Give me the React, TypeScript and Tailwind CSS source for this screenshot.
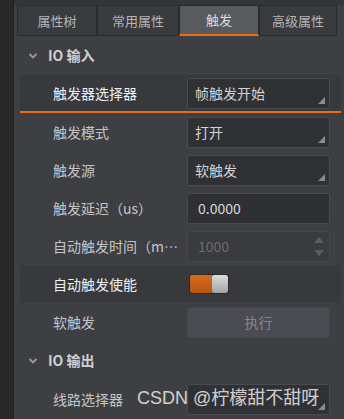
import type { ReactNode } from 'react';

const tabs = [
  { label: '属性树', w: 'w-[80px]' },
  { label: '常用属性', w: 'w-[82px]' },
  { label: '触发', w: 'w-[80px]', active: true },
  { label: '高级属性', w: 'w-[78px]' },
];

function Chevron() {
  return (
    <svg width="10" height="8" viewBox="0 0 10 8" className="mr-[10px]">
      <path d="M1.5 2 L5 5.5 L8.5 2" fill="none" stroke="#9a9b9e" strokeWidth="1.8" />
    </svg>
  );
}

function Section({ title }: { title: string }) {
  return (
    <div className="flex h-[39px] items-center pl-[8px] text-[14px] font-bold text-[#cfd0d2]">
      <Chevron />
      {title}
    </div>
  );
}

function Row({
  label,
  active,
  marked,
  children,
}: {
  label: string;
  active?: boolean;
  marked?: boolean;
  children?: ReactNode;
}) {
  return (
    <div
      className={`flex h-[38px] items-center mr-[3px] ${active ? 'bg-[#38393c]' : ''} ${
        marked ? 'border-b-2 border-[#f06a10]' : ''
      }`}
    >
      <div
        className={`w-[167px] shrink-0 truncate pl-[33px] pr-[6px] text-[14px] ${
          active ? 'text-[#f0f0f0]' : 'text-[#c4c5c7]'
        }`}
      >
        {label}
      </div>
      <div className="w-[143px] shrink-0">{children}</div>
    </div>
  );
}

function Select({ value }: { value: string }) {
  return (
    <div className="relative flex h-[31px] items-center rounded-[2px] border border-[#4a4b4e] bg-[#303134] pl-[7px] text-[14px] text-[#d2d3d5]">
      {value}
      <svg width="7" height="7" viewBox="0 0 7 7" className="absolute right-[4px] bottom-[4px]">
        <path d="M7 0 L7 7 L0 7 Z" fill="#8a8b8e" />
      </svg>
    </div>
  );
}

export default function App() {
  return (
    <div className="flex h-[419px] w-[344px] overflow-hidden bg-[#3e3f42] font-['Microsoft_YaHei','Noto_Sans_CJK_SC',sans-serif]">
      <div className="w-[14px] shrink-0 border-r border-[#1f1f1f] bg-[#282828]" />
      <div className="relative flex flex-1 flex-col">
        <div className="h-[5px] bg-[#343538]" />
        <div className="ml-[3px] flex h-[31px]">
          {tabs.map((t) => (
            <div
              key={t.label}
              className={`${t.w} flex items-center justify-center border border-[#2a2b2e] text-[13px] ${
                t.active
                  ? 'border-b-2 border-b-[#f06a10] bg-[#585a5e] text-[#dcdde0]'
                  : 'bg-[#3a3b3e] text-[#b4b5b8]'
              }`}
            >
              {t.label}
            </div>
          ))}
        </div>

        <div className="ml-[6px] flex flex-col">
          <Section title="IO 输入" />
          <Row label="触发器选择器" active marked>
            <Select value="帧触发开始" />
          </Row>
          <Row label="触发模式">
            <Select value="打开" />
          </Row>
          <Row label="触发源">
            <Select value="软触发" />
          </Row>
          <Row label="触发延迟（us）">
            <div className="flex h-[31px] items-center rounded-[2px] border border-[#4a4b4e] bg-[#2f3033] pl-[10px] text-[14px] text-[#d6d7d9]">
              0.0000
            </div>
          </Row>
          <Row label="自动触发时间（ms）">
            <div className="relative flex h-[31px] items-center rounded-[2px] border border-[#46474a] bg-[#3a3b3e] pl-[10px] text-[14px] text-[#6c6d70]">
              1000
              <svg width="10" height="24" viewBox="0 0 10 24" className="absolute right-[5px] top-[3px]">
                <path d="M0 8 L5 2 L10 8 Z" fill="#5c5d60" />
                <path d="M0 15 L10 15 L5 21 Z" fill="#5c5d60" />
              </svg>
            </div>
          </Row>
          <Row label="自动触发使能" active>
            <div className="ml-[2px] flex h-[20px] w-[40px] overflow-hidden rounded-[3px] border border-[#2a2a2a]">
              <div className="flex-1 bg-gradient-to-b from-[#d86c1c] to-[#b85410]" />
              <div className="w-[16px] rounded-[2px] bg-gradient-to-b from-[#dcdcdc] to-[#a4a4a4]" />
            </div>
          </Row>
          <Row label="软触发">
            <div className="flex h-[31px] items-center justify-center rounded-[2px] border border-[#44454c] bg-[#4a4b53] text-[14px] text-[#85868a]">
              执行
            </div>
          </Row>
          <Section title="IO 输出" />
          <Row label="线路选择器">
            <Select value="" />
          </Row>
        </div>

        <div className="absolute left-[123px] top-[389px] text-[18px] leading-none text-[#e4e4e4]/90 font-['Liberation_Sans','Noto_Sans_CJK_SC',sans-serif]">
          CSDN @柠檬甜不甜呀
        </div>
      </div>
    </div>
  );
}
